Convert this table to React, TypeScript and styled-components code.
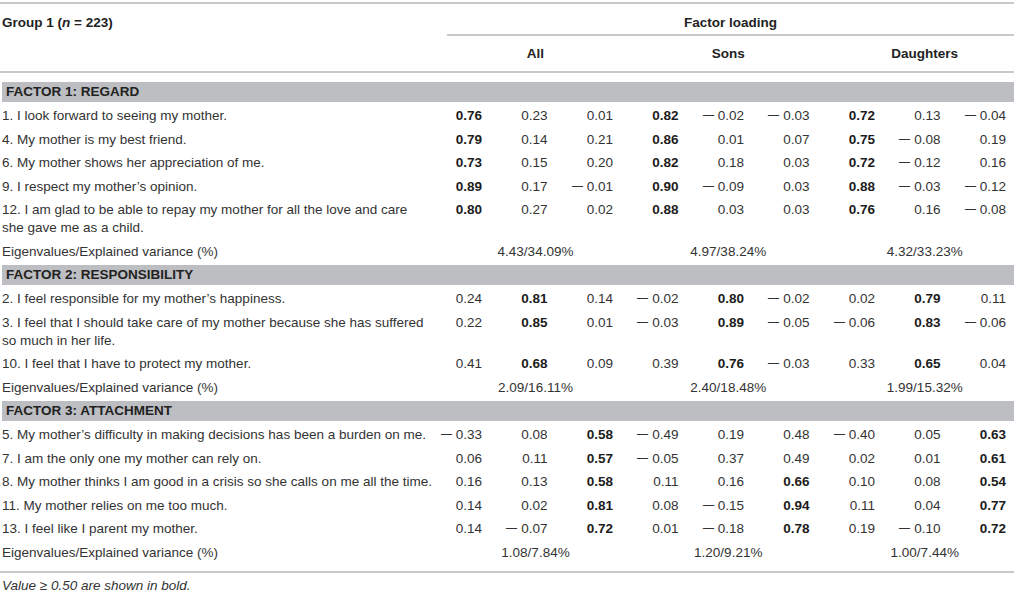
import React from "react";
import styled, { createGlobalStyle } from "styled-components";

const Global = createGlobalStyle`
  html, body { margin: 0; padding: 0; background: #ffffff; }
  body { font-family: "Liberation Sans", Arial, Helvetica, sans-serif; font-size: 13.5px; color: #333; }
`;

const COLS = "432px 58px repeat(8, 65.5px)";

const Page = styled.div`
  width: 1014px;
  padding-top: 2px;
`;

const Table = styled.div`
  border-top: 2px solid #c9c9c9;
  border-bottom: 2px solid #c9c9c9;
`;

const Header = styled.div`
  display: grid;
  grid-template-columns: ${COLS};
  border-bottom: 2px solid #c9c9c9;
  font-weight: bold;
  color: #222;
  line-height: 18px;
`;

const GroupTitle = styled.div`
  grid-column: 1;
  grid-row: 1 / 3;
  padding: 10px 0 0 2px;
`;

const FactorLoading = styled.div`
  grid-column: 2 / -1;
  grid-row: 1;
  margin-left: 15px;
  padding: 10px 0 2px;
  text-align: center;
  border-bottom: 2px solid #c9c9c9;
`;

const SubHead = styled.div<{ $col: number }>`
  grid-row: 2;
  grid-column: ${(p) => p.$col} / span 3;
  padding: 8.7px 0 8.3px 18px;
  text-align: center;
`;

const Body = styled.div`
  padding: 5px 0 9px;
`;

const Section = styled.section`
  margin-top: 4px;
`;

const Band = styled.div`
  margin-left: 2px;
  padding-left: 4px;
  height: 20px;
  line-height: 20px;
  background: #bdbec1;
  font-weight: bold;
  color: #222;
`;

const Row = styled.div`
  display: grid;
  grid-template-columns: ${COLS};
  line-height: 18px;
  padding-top: 5.5px;
`;

const Label = styled.div`
  grid-column: 1;
  padding-left: 2px;
  white-space: nowrap;
`;

const Num = styled.div<{ $bold?: boolean }>`
  text-align: right;
  padding-right: 8px;
  white-space: nowrap;
  font-weight: ${(p) => (p.$bold ? "bold" : "normal")};
  color: ${(p) => (p.$bold ? "#1c1c1c" : "#333")};
`;

const MinusSign = styled.span`
  display: inline-block;
  width: 16px;
  text-align: left;
  transform: scaleX(1.7);
  transform-origin: left center;
`;

const Eigen = styled.div`
  grid-column: span 3;
  padding-left: 18px;
  text-align: center;
  white-space: nowrap;
`;

const Note = styled.p`
  margin: 3.7px 0 0;
  padding-left: 2px;
  line-height: 18px;
  font-style: italic;
  color: #333;
`;

type Cell = string;
type Item = { label: React.ReactNode; vals: Cell[] };
type Factor = { title: string; items: Item[]; eigen: string[] };

const factors: Factor[] = [
  {
    title: "FACTOR 1: REGARD",
    items: [
      { label: "1. I look forward to seeing my mother.", vals: ["*0.76", "0.23", "0.01", "*0.82", "-0.02", "-0.03", "*0.72", "0.13", "-0.04"] },
      { label: "4. My mother is my best friend.", vals: ["*0.79", "0.14", "0.21", "*0.86", "0.01", "0.07", "*0.75", "-0.08", "0.19"] },
      { label: "6. My mother shows her appreciation of me.", vals: ["*0.73", "0.15", "0.20", "*0.82", "0.18", "0.03", "*0.72", "-0.12", "0.16"] },
      { label: "9. I respect my mother’s opinion.", vals: ["*0.89", "0.17", "-0.01", "*0.90", "-0.09", "0.03", "*0.88", "-0.03", "-0.12"] },
      {
        label: (
          <>
            12. I am glad to be able to repay my mother for all the love and care
            <br />
            she gave me as a child.
          </>
        ),
        vals: ["*0.80", "0.27", "0.02", "*0.88", "0.03", "0.03", "*0.76", "0.16", "-0.08"],
      },
    ],
    eigen: ["4.43/34.09%", "4.97/38.24%", "4.32/33.23%"],
  },
  {
    title: "FACTOR 2: RESPONSIBILITY",
    items: [
      { label: "2. I feel responsible for my mother’s happiness.", vals: ["0.24", "*0.81", "0.14", "-0.02", "*0.80", "-0.02", "0.02", "*0.79", "0.11"] },
      {
        label: (
          <>
            3. I feel that I should take care of my mother because she has suffered
            <br />
            so much in her life.
          </>
        ),
        vals: ["0.22", "*0.85", "0.01", "-0.03", "*0.89", "-0.05", "-0.06", "*0.83", "-0.06"],
      },
      { label: "10. I feel that I have to protect my mother.", vals: ["0.41", "*0.68", "0.09", "0.39", "*0.76", "-0.03", "0.33", "*0.65", "0.04"] },
    ],
    eigen: ["2.09/16.11%", "2.40/18.48%", "1.99/15.32%"],
  },
  {
    title: "FACTOR 3: ATTACHMENT",
    items: [
      { label: "5. My mother’s difficulty in making decisions has been a burden on me.", vals: ["-0.33", "0.08", "*0.58", "-0.49", "0.19", "0.48", "-0.40", "0.05", "*0.63"] },
      { label: "7. I am the only one my mother can rely on.", vals: ["0.06", "0.11", "*0.57", "-0.05", "0.37", "0.49", "0.02", "0.01", "*0.61"] },
      { label: "8. My mother thinks I am good in a crisis so she calls on me all the time.", vals: ["0.16", "0.13", "*0.58", "0.11", "0.16", "*0.66", "0.10", "0.08", "*0.54"] },
      { label: "11. My mother relies on me too much.", vals: ["0.14", "0.02", "*0.81", "0.08", "-0.15", "*0.94", "0.11", "0.04", "*0.77"] },
      { label: "13. I feel like I parent my mother.", vals: ["0.14", "-0.07", "*0.72", "0.01", "-0.18", "*0.78", "0.19", "-0.10", "*0.72"] },
    ],
    eigen: ["1.08/7.84%", "1.20/9.21%", "1.00/7.44%"],
  },
];

function Value({ v }: { v: string }) {
  const bold = v.startsWith("*");
  const raw = bold ? v.slice(1) : v;
  const neg = raw.startsWith("-");
  const digits = neg ? raw.slice(1) : raw;
  return (
    <Num $bold={bold}>
      {neg && <MinusSign>−</MinusSign>}
      {digits}
    </Num>
  );
}

export default function App() {
  return (
    <Page>
      <Global />
      <Table>
        <Header>
          <GroupTitle>
            Group 1 (<i>n</i> = 223)
          </GroupTitle>
          <FactorLoading>Factor loading</FactorLoading>
          <SubHead $col={2}>All</SubHead>
          <SubHead $col={5}>Sons</SubHead>
          <SubHead $col={8}>Daughters</SubHead>
        </Header>
        <Body>
          {factors.map((f) => (
            <Section key={f.title}>
              <Band>{f.title}</Band>
              {f.items.map((it, i) => (
                <Row key={i}>
                  <Label>{it.label}</Label>
                  {it.vals.map((v, j) => (
                    <Value key={j} v={v} />
                  ))}
                </Row>
              ))}
              <Row>
                <Label>Eigenvalues/Explained variance (%)</Label>
                {f.eigen.map((e) => (
                  <Eigen key={e}>{e}</Eigen>
                ))}
              </Row>
            </Section>
          ))}
        </Body>
      </Table>
      <Note>Value ≥ 0.50 are shown in bold.</Note>
    </Page>
  );
}
